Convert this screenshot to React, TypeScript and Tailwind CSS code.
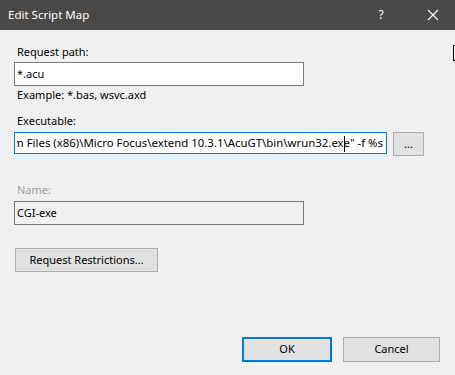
import React from "react";

const font = { fontFamily: '"Segoe UI", "Noto Sans", "Liberation Sans", sans-serif' };

export default function App() {
  const exeA = '"C:\\Program Files (x86)\\Micro Focus\\extend 10.3.1\\AcuGT\\bin\\wrun32.ex';
  const exeB = 'e" -f %s';
  return (
    <div className="relative w-[455px] h-[375px] bg-[#f0f0f0] overflow-hidden text-[11px] text-black" style={font}>
      {/* title bar */}
      <div className="h-[30px] bg-[#4b4947] flex items-center text-white">
        <div className="pl-[8px] flex-1 text-[11.5px]">Edit Script Map</div>
        <div className="w-[20px] text-center mr-[32px] text-[12px]">?</div>
        <div className="w-[20px] flex items-center justify-center mr-[12px]">
          <svg width="12" height="12" viewBox="0 0 12 12">
            <path d="M1 1 L11 11 M11 1 L1 11" stroke="white" strokeWidth="1.1" />
          </svg>
        </div>
      </div>

      <div className="pl-[14px]">
        <div className="mt-[14px] h-[16px] leading-[16px] pl-[3px]">Request path:</div>
        <div className="mt-[2px] w-[290px] h-[24px] border border-[#7a7a7a] bg-white flex items-center pl-[2px]">*.acu</div>
        <div className="mt-[1px] h-[16px] leading-[16px] pl-[3px]">Example: *.bas, wsvc.axd</div>
        <div className="mt-[10px] h-[16px] leading-[16px] pl-[3px]">Executable:</div>
        <div className="mt-[3px] flex items-start">
          <div className="w-[373px] h-[22px] border border-[#0078d7] bg-white flex items-center overflow-hidden pl-[2px] pr-[3px]">
            <div className="flex-1 flex justify-end overflow-hidden text-[11.4px]">
              <span className="whitespace-nowrap">
                {exeA}
                <span className="inline-block relative w-0 h-[12px] align-middle">
                  <span className="absolute left-0 top-[-2px] h-[16px] w-[1px] bg-black" />
                </span>
                {exeB}
              </span>
            </div>
          </div>
          <div className="ml-[6px] w-[31px] h-[24px] border border-[#adadad] bg-[#e1e1e1] flex items-center justify-center leading-none pb-[2px]">...</div>
        </div>
        <div className="mt-[26px] h-[16px] leading-[16px] pl-[3px] text-[#a0a0a0]">Name:</div>
        <div className="mt-[3px] w-[290px] h-[24px] border border-[#7a7a7a] bg-[#f0f0f0] flex items-center pl-[2px]">CGI-exe</div>
        <div className="mt-[23px] ml-[1px] w-[143px] h-[24px] border border-[#adadad] bg-[#e1e1e1] flex items-center justify-center">Request Restrictions...</div>
      </div>

      <div className="mt-[65px] flex justify-end pr-[15px] gap-[11px]">
        <div className="w-[90px] h-[25px] border-2 border-[#0078d7] bg-[#e1e1e1] flex items-center justify-center">OK</div>
        <div className="w-[97px] h-[25px] border border-[#adadad] bg-[#e1e1e1] flex items-center justify-center">Cancel</div>
      </div>

      {/* partial bracket at right edge */}
      <div className="absolute left-[453px] top-[45px] w-[4px] h-[16px] border-l border-t border-b border-black" />
    </div>
  );
}
